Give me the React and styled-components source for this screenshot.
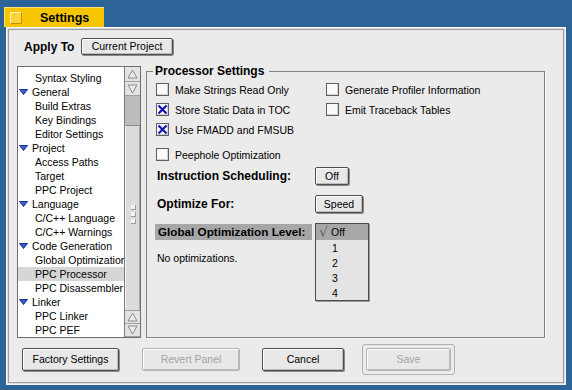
import React from "react";
import styled, { createGlobalStyle } from "styled-components";

const Global = createGlobalStyle`
  html, body { margin: 0; padding: 0; background: #2d6497; }
  body { font-family: "Liberation Sans", Arial, sans-serif; font-size: 10.5px; color: #000; }
  * { box-sizing: border-box; }
`;

const Page = styled.div`
  width: 572px;
  height: 390px;
  padding: 7px 0 0 4px;
  display: flex;
  flex-direction: column;
  align-items: flex-start;
`;

const Tab = styled.div`
  width: 100px;
  height: 20px;
  background: #f8c600;
  border-top: 1px solid #ffe27a;
  border-left: 1px solid #ffe27a;
  display: flex;
  align-items: center;
  gap: 18px;
  padding-left: 5px;
`;

const TabBox = styled.div`
  width: 12px;
  height: 12px;
  background: #fbd43a;
  border-top: 1px solid #fff6b8;
  border-left: 1px solid #fff6b8;
  border-bottom: 1px solid #c88a00;
  border-right: 1px solid #c88a00;
`;

const TabTitle = styled.span`
  font-weight: bold;
  font-size: 12.5px;
`;

const Window = styled.div`
  margin-left: 2px;
  width: 560px;
  height: 358px;
  background: #ebebeb;
  border: 1px solid #f6f6f6;
  box-shadow: inset 0 0 0 1px #dedede, inset 0 0 0 2px #9c9c9c;
  padding: 10px 20px 0 10px;
  display: flex;
  flex-direction: column;
`;

const ApplyRow = styled.div`
  height: 17px;
  margin-left: 7px;
  display: flex;
  align-items: center;
`;

const BoldLabel = styled.span`
  font-weight: bold;
  font-size: 12px;
  width: ${(p) => p.$w}px;
  padding-left: ${(p) => p.$pl || 0}px;
  flex: none;
`;

const Btn = styled.button`
  width: ${(p) => p.$w}px;
  height: ${(p) => p.$h || 23}px;
  flex: none;
  font-family: inherit;
  font-size: 10.5px;
  color: ${(p) => (p.disabled ? "#a3a3a3" : "#000")};
  background: #e8e8e8;
  border: 1px solid ${(p) => (p.disabled ? "#b3b3b3" : "#4e4e4e")};
  border-radius: 2px;
  box-shadow: inset 1px 1px 0 #fff, inset -1px -1px 0 #bcbcbc
    ${(p) => (p.disabled ? "" : ", 1px 1px 0 #8a8a8a")};
  padding: 0;
  margin-left: ${(p) => p.$ml || 0}px;
  line-height: 1;
`;

const Main = styled.div`
  margin-top: 11px;
  height: 272px;
  display: flex;
  gap: 5px;
`;

const List = styled.div`
  width: 124px;
  height: 272px;
  border: 1px solid #6e6e6e;
  background: #fff;
  display: flex;
  flex: none;
`;

const Items = styled.div`
  flex: 1;
  overflow: hidden;
  padding-top: 4px;
`;

const Row = styled.div`
  height: 14px;
  display: flex;
  align-items: center;
  gap: 4px;
  padding-left: ${(p) => (p.$header ? 1 : 17)}px;
  background: ${(p) => (p.$selected ? "#d6d6d6" : "transparent")};
  white-space: nowrap;
`;

const Scroll = styled.div`
  width: 16px;
  border-left: 1px solid #7c7c7c;
  display: flex;
  flex-direction: column;
  background: #bdbdbd;
`;

const ArrowBtn = styled.div`
  height: ${(p) => p.$h}px;
  background: #e3e3e3;
  border-bottom: 1px solid #a0a0a0;
  border-top: ${(p) => (p.$top ? "1px solid #a0a0a0" : "none")};
  display: flex;
  align-items: center;
  justify-content: center;
  flex: none;
`;

const Track = styled.div`
  height: 29px;
  background: #bcbcbc;
  flex: none;
`;

const Thumb = styled.div`
  flex: 1;
  background: #dcdcdc;
  border-top: 1px solid #8c8c8c;
  border-left: 1px solid #f6f6f6;
  box-shadow: inset -1px 0 0 #a8a8a8;
  display: flex;
  flex-direction: column;
  align-items: center;
  justify-content: center;
  gap: 2px;
  padding-left: 1px;
  padding-bottom: 8px;
`;

const Grip = styled.div`
  width: 5px;
  height: 5px;
  background: #f4f4f4;
  border-right: 1px solid #9a9a9a;
  border-bottom: 1px solid #9a9a9a;
`;

const Group = styled.div`
  width: 400px;
  height: 267px;
  margin-top: 5px;
  border: 1px solid #818181;
  box-shadow: 1px 1px 0 #fafafa;
  padding-left: 9px;
  display: flex;
  flex-direction: column;
`;

const GroupTitle = styled.div`
  align-self: flex-start;
  margin: -8px 0 0 -3px;
  padding: 0 5px 0 2px;
  background: #ebebeb;
  font-weight: bold;
  font-size: 12px;
  line-height: 14px;
  height: 14px;
`;

const CheckGrid = styled.div`
  margin-top: 5px;
  display: grid;
  grid-template-columns: 170px auto;
  grid-template-rows: repeat(3, 13px);
  grid-auto-flow: column;
  row-gap: 7px;
`;

const CheckRow = styled.div`
  display: flex;
  align-items: center;
  gap: 6px;
  height: 13px;
  margin-top: ${(p) => p.$mt || 0}px;
`;

const Box = styled.div`
  width: 13px;
  height: 13px;
  border: 1px solid #5e5e5e;
  background: #fafafa;
  box-shadow: inset -1px -1px 0 #d0d0d0;
  display: flex;
  align-items: center;
  justify-content: center;
  flex: none;
`;

const SettingRow = styled.div`
  margin-top: ${(p) => p.$mt}px;
  height: 18px;
  display: flex;
  align-items: center;
`;

const GlobalRow = styled.div`
  margin-top: 10px;
  display: flex;
  align-items: flex-start;
`;

const GlobalLeft = styled.div`
  width: 159px;
  display: flex;
  flex-direction: column;
`;

const HiLabel = styled.div`
  margin: 1px 0 0 -1px;
  width: 157px;
  height: 16px;
  line-height: 16px;
  padding-left: 3px;
  background: #a6a6a6;
  font-weight: bold;
  font-size: 11.7px;
`;

const Desc = styled.div`
  margin-top: 11px;
  padding-left: 1px;
  line-height: 14px;
`;

const Popup = styled.div`
  width: 54px;
  border: 1px solid #4c4c4c;
  background: #e4e4e4;
  box-shadow: 1px 1px 0 #9a9a9a;
`;

const PopItem = styled.div`
  height: ${(p) => (p.$sel ? 16 : 15)}px;
  display: flex;
  align-items: center;
  padding-left: 3px;
  background: ${(p) => (p.$sel ? "#a8a8a8" : "transparent")};
`;

const Mark = styled.span`
  width: 12px;
  flex: none;
  color: #5c5c5c;
  font-size: 14px;
  font-family: "DejaVu Sans", sans-serif;
  line-height: 1;
`;

const PopText = styled.span`
  margin-left: ${(p) => (p.$num ? 1 : 0)}px;
`;

const ButtonRow = styled.div`
  margin-top: 6px;
  padding-left: 5px;
  display: flex;
  align-items: center;
  height: 31px;
`;

const Ring = styled.div`
  margin-left: 18px;
  padding: 3px;
  border: 1px solid #b0b0b0;
  border-radius: 3px;
  display: flex;
`;

const Tri = () => (
  <svg width="9" height="6" viewBox="0 0 9 6">
    <polygon points="0.5,0.5 8.5,0.5 4.5,5.5" fill="#3a5ad8" stroke="#1c2f8c" strokeWidth="1" />
  </svg>
);

const Arrow = ({ up }) => (
  <svg width="11" height="10" viewBox="0 0 11 10">
    <polygon
      points={up ? "5.5,1 1,9 10,9" : "1,1 10,1 5.5,9"}
      fill="#ececec"
      stroke="#8a8a8a"
      strokeWidth="1"
    />
  </svg>
);

const XMark = () => (
  <svg width="11" height="11" viewBox="0 0 11 11">
    <path d="M1.5 1.5 L9.5 9.5 M9.5 1.5 L1.5 9.5" stroke="#1414b4" strokeWidth="2.2" />
  </svg>
);

const tree = [
  ["Syntax Styling"],
  ["General", "h"],
  ["Build Extras"],
  ["Key Bindings"],
  ["Editor Settings"],
  ["Project", "h"],
  ["Access Paths"],
  ["Target"],
  ["PPC Project"],
  ["Language", "h"],
  ["C/C++ Language"],
  ["C/C++ Warnings"],
  ["Code Generation", "h"],
  ["Global Optimizations"],
  ["PPC Processor", "s"],
  ["PPC Disassembler"],
  ["Linker", "h"],
  ["PPC Linker"],
  ["PPC PEF"],
];

const Check = ({ label, checked, mt }) => (
  <CheckRow $mt={mt}>
    <Box>{checked && <XMark />}</Box>
    <span>{label}</span>
  </CheckRow>
);

export default function App() {
  return (
    <>
      <Global />
      <Page>
        <Tab>
          <TabBox />
          <TabTitle>Settings</TabTitle>
        </Tab>
        <Window>
          <ApplyRow>
            <BoldLabel $w={57}>Apply To</BoldLabel>
            <Btn $w={92} $h={17}>Current Project</Btn>
          </ApplyRow>
          <Main>
            <List>
              <Items>
                {tree.map(([t, k]) => (
                  <Row key={t} $header={k === "h"} $selected={k === "s"}>
                    {k === "h" && <Tri />}
                    <span>{t}</span>
                  </Row>
                ))}
              </Items>
              <Scroll>
                <ArrowBtn $h={15}><Arrow up /></ArrowBtn>
                <ArrowBtn $h={14}><Arrow /></ArrowBtn>
                <Track />
                <Thumb>
                  <Grip />
                  <Grip />
                  <Grip />
                </Thumb>
                <ArrowBtn $h={14} $top><Arrow up /></ArrowBtn>
                <ArrowBtn $h={13}><Arrow /></ArrowBtn>
              </Scroll>
            </List>
            <Group>
              <GroupTitle>Processor Settings</GroupTitle>
              <CheckGrid>
                <Check label="Make Strings Read Only" />
                <Check label="Store Static Data in TOC" checked />
                <Check label="Use FMADD and FMSUB" checked />
                <Check label="Generate Profiler Information" />
                <Check label="Emit Traceback Tables" />
              </CheckGrid>
              <Check label="Peephole Optimization" mt={12} />
              <SettingRow $mt={6}>
                <BoldLabel $w={159} $pl={1}>Instruction Scheduling:</BoldLabel>
                <Btn $w={34} $h={18}>Off</Btn>
              </SettingRow>
              <SettingRow $mt={10}>
                <BoldLabel $w={159} $pl={1}>Optimize For:</BoldLabel>
                <Btn $w={48} $h={18}>Speed</Btn>
              </SettingRow>
              <GlobalRow>
                <GlobalLeft>
                  <HiLabel>Global Optimization Level:</HiLabel>
                  <Desc>No optimizations.</Desc>
                </GlobalLeft>
                <Popup>
                  <PopItem $sel><Mark>√</Mark><PopText>Off</PopText></PopItem>
                  {["1", "2", "3", "4"].map((n) => (
                    <PopItem key={n}><Mark /><PopText $num>{n}</PopText></PopItem>
                  ))}
                </Popup>
              </GlobalRow>
            </Group>
          </Main>
          <ButtonRow>
            <Btn $w={97}>Factory Settings</Btn>
            <Btn $w={98} $ml={23} disabled>Revert Panel</Btn>
            <Btn $w={82} $ml={22}>Cancel</Btn>
            <Ring>
              <Btn $w={85} disabled>Save</Btn>
            </Ring>
          </ButtonRow>
        </Window>
      </Page>
    </>
  );
}
